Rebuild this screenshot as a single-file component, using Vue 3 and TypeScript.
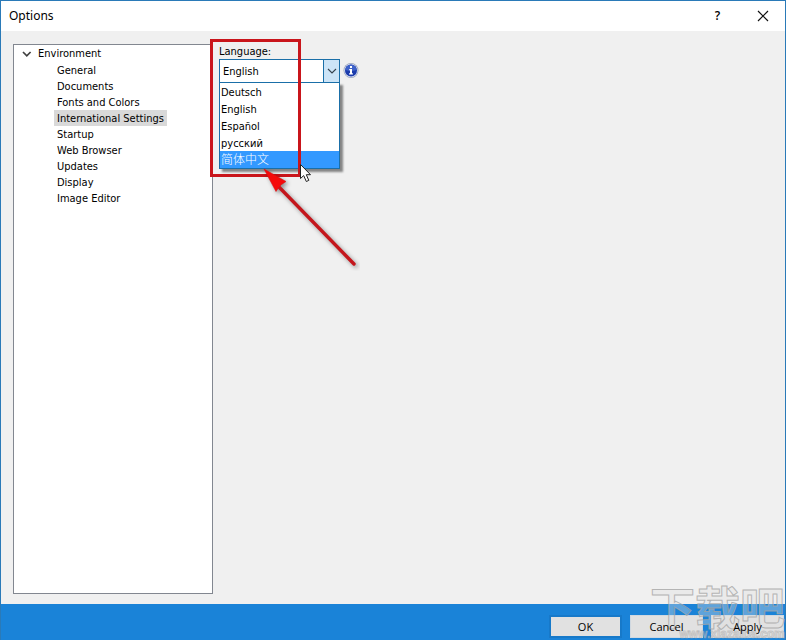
<script setup lang="ts">
import { ref } from 'vue'

const pages: string[] = [
  'General',
  'Documents',
  'Fonts and Colors',
  'International Settings',
  'Startup',
  'Web Browser',
  'Updates',
  'Display',
  'Image Editor',
]
const languages: string[] = ['Deutsch', 'English', 'Español', 'русский', '简体中文']

const currentPage = ref('International Settings')
const language = ref('English')
const highlighted = ref('简体中文')

function choose(name: string): void {
  highlighted.value = name
  language.value = name
}
</script>

<template>
  <div class="window">
    <header class="titlebar">
      <h1 class="title">Options</h1>
      <button class="caption" type="button" aria-label="Help">?</button>
      <button class="caption" type="button" aria-label="Close">
        <svg width="12" height="12" viewBox="0 0 12 12">
          <path d="M1 1 L11 11 M11 1 L1 11" stroke="#111" stroke-width="1.2" fill="none" />
        </svg>
      </button>
    </header>

    <main class="body">
      <nav class="tree">
        <button class="root" type="button">
          <svg width="10" height="8" viewBox="0 0 10 8">
            <path d="M1 2 L4.800 5.800 L8.600 2" stroke="#404040" stroke-width="1.7" fill="none" />
          </svg>
          Environment
        </button>
        <ul class="pages">
          <li v-for="page in pages" :key="page">
            <button
              type="button"
              class="page"
              :class="{ current: page === currentPage }"
              @click="currentPage = page"
            >{{ page }}</button>
          </li>
        </ul>
      </nav>

      <section class="settings">
        <label class="label" for="language">Language:</label>
        <div class="row">
          <div class="combo">
            <select id="language" v-model="language" class="field">
              <option v-for="name in languages" :key="name">{{ name }}</option>
            </select>
            <span class="drop">
              <svg width="10" height="6" viewBox="0 0 10 6">
                <path d="M1 1 L5 5 L9 1" stroke="#35424d" stroke-width="1.1" fill="none" />
              </svg>
            </span>
            <ul class="list" role="listbox" aria-label="Language">
              <li
                v-for="name in languages"
                :key="name"
                role="option"
                class="item"
                :class="{ active: name === highlighted }"
                :aria-selected="name === highlighted"
                @click="choose(name)"
              >{{ name }}</li>
            </ul>
          </div>
          <svg class="info" width="16" height="16" viewBox="0 0 16 16">
            <circle cx="8" cy="7.500" r="7.500" fill="#9aa5bd" />
            <circle cx="8" cy="7.500" r="6.700" fill="#dde4f5" />
            <circle cx="8" cy="7.500" r="6" fill="#1c3cac" />
            <path d="M2.500 7 A5.500 5.500 0 0 1 13.500 7 Q8 9 2.500 7Z" fill="#3f62c8" />
            <path d="M7 3h2v1.900H7z M6.200 6h2.800v4.300h.900v1.200H6.100v-1.200H7V7.200h-.800z" fill="#fff" />
          </svg>
        </div>
      </section>
    </main>

    <footer class="footer">
      <button class="action default" type="button"><span class="caption-text">OK</span></button>
      <button class="action" type="button"><span class="caption-text">Cancel</span></button>
      <button class="action" type="button"><span class="caption-text">Apply</span></button>
    </footer>

    <div class="frame"></div>
    <svg class="pointer" width="110" height="116" viewBox="0 0 110 116">
      <g class="arrow">
        <path d="M28 31 L104 109" stroke="#c4161c" stroke-width="3.4" stroke-linecap="round" />
        <path d="M14 14 L36 26.500 L31.500 29.500 L29 32 L26 36.500Z" fill="#f50a0a" stroke="#dc0f12" stroke-width=".6" />
      </g>
      <path
        d="M50.500 9.500 V23.500 L53.700 20.600 L56.300 26.500 L58.800 25.400 L56.300 19.700 H60.500Z"
        fill="#fff"
        stroke="#222"
      />
    </svg>

    <div class="watermark">
      <span class="mark">下载吧</span>
      <span class="site">www.xiazaiba.com</span>
    </div>
  </div>
</template>

<style>
html,
body {
  margin: 0;
}
</style>

<style scoped>
.window {
  position: relative;
  box-sizing: border-box;
  min-height: 100vh;
  display: flex;
  flex-direction: column;
  overflow: hidden;
  background: #f0f0f0;
  border: 1px solid #2a7ab8;
  border-bottom: 0;
  color: #000;
  font: 11px/16px Tahoma, 'DejaVu Sans Condensed', 'Noto Sans CJK SC', sans-serif;
}

button {
  padding: 0;
  border: 0;
  background: none;
  color: inherit;
  font: inherit;
}

ul {
  margin: 0;
  padding: 0;
  list-style: none;
}

.titlebar {
  display: flex;
  align-items: center;
  height: 30px;
  background: #fff;
}

.title {
  flex: 1;
  margin: 0;
  padding-left: 8px;
  font: 12px/16px 'Noto Sans', 'Open Sans', sans-serif;
}

.caption {
  display: flex;
  align-items: center;
  justify-content: center;
  width: 45px;
  height: 28px;
  font: 600 12px/16px 'Open Sans', sans-serif;
}

.body {
  flex: 1;
  display: flex;
  gap: 6px;
  padding: 13px 12px 10px;
}

.tree {
  box-sizing: border-box;
  width: 200px;
  padding: 1px 8px;
  background: #fff;
  border: 1px solid #828790;
}

.root {
  display: flex;
  align-items: center;
  gap: 6px;
}

.pages {
  padding-left: 32px;
}

.page {
  display: block;
  padding: 2px 3px 0;
  line-height: 14px;
}

.current {
  background: #d9d9d9;
}

.settings {
  flex: 1;
}

.label {
  display: block;
  line-height: 15px;
}

.row {
  display: flex;
  align-items: center;
  gap: 3px;
}

.combo {
  position: relative;
  display: flex;
  box-sizing: border-box;
  width: 121px;
  height: 24px;
  background: #fff;
  border: 1px solid #1a6fa8;
}

.field {
  flex: 1;
  min-width: 0;
  padding: 1px 3px 0;
  border: 0;
  outline: 0;
  appearance: none;
  background: transparent;
  color: #000;
  font: inherit;
}

.drop {
  display: flex;
  align-items: center;
  justify-content: center;
  width: 15px;
  background: #cce4f7;
  border-left: 1px solid #1a6fa8;
  pointer-events: none;
}

.list {
  position: absolute;
  top: 22px;
  left: -1px;
  right: -1px;
  background: #fff;
  border: 1px solid #1a6fa8;
  box-shadow: 3px 3px 2px rgba(0, 0, 0, 0.45);
}

.item {
  box-sizing: border-box;
  height: 17px;
  padding: 2px 0 0 1px;
  line-height: 15px;
}

.active {
  background: #3399ff;
  color: #fff;
  font-size: 12px;
  font-weight: 300;
}

.footer {
  display: flex;
  justify-content: flex-end;
  gap: 8px;
  padding: 11px 1px 2px;
  background: #1a83d8;
}

.action {
  box-sizing: border-box;
  width: 73px;
  height: 23px;
  background: #e1e1e1;
  border: 1px solid #d0d8e0;
  font: 11px/16px 'Open Sans', sans-serif;
}

.default {
  border: 2px solid #1779c9;
}

.caption-text {
  position: relative;
  z-index: 1;
}

.frame {
  position: absolute;
  box-sizing: border-box;
  left: 209px;
  top: 38px;
  width: 91px;
  height: 138px;
  border: 3px solid #c9151b;
  pointer-events: none;
}

.pointer {
  position: absolute;
  left: 249px;
  top: 154px;
  pointer-events: none;
}

.arrow {
  filter: drop-shadow(2px 2px 2px rgba(0, 0, 0, 0.4));
}

.watermark {
  position: absolute;
  right: 0;
  bottom: 0;
  display: flex;
  flex-direction: column;
  align-items: flex-end;
  pointer-events: none;
}

.mark {
  height: 46px;
  font: 700 45px/46px 'Noto Sans CJK SC', sans-serif;
  color: rgba(225, 225, 225, 0.35);
  -webkit-text-stroke: 1px rgba(165, 165, 165, 0.8);
}

.site {
  font: 700 12px/11px 'Liberation Sans', sans-serif;
  color: rgba(225, 225, 225, 0.5);
  -webkit-text-stroke: 1px rgba(150, 150, 150, 0.4);
}
</style>
